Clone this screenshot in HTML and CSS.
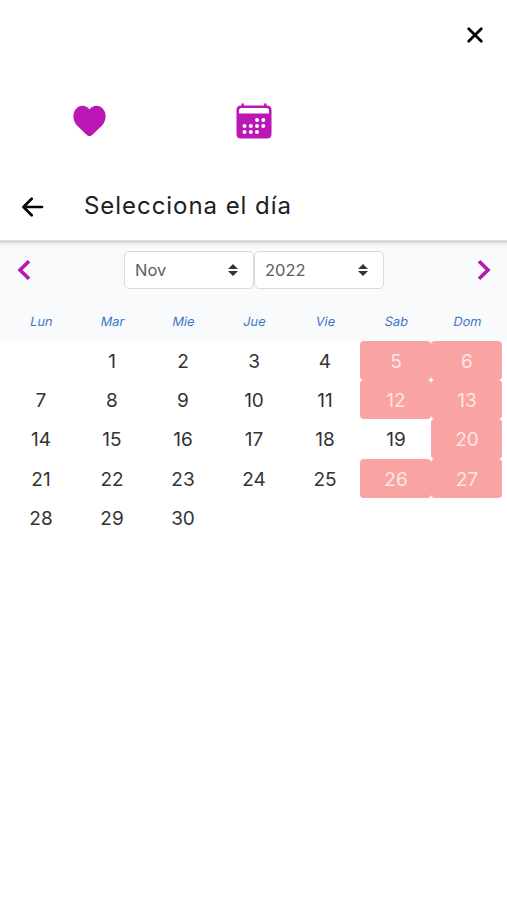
FILE: index.html
```html
<!DOCTYPE html>
<html lang="es">
<head>
<meta charset="utf-8">
<meta name="viewport" content="width=device-width, initial-scale=1">
<title>Selecciona el día</title>
<link rel="stylesheet" href="styles.css">
</head>
<body>
<header class="topbar">
  <button class="icon-button" aria-label="Cerrar"><svg width="18" height="18" viewBox="0 0 18 18"><path class="line" d="M2.700 2.700 15.300 15.300M15.300 2.700 2.700 15.300"/></svg></button>
</header>
<nav class="steps">
  <svg class="heart" width="34" height="32" viewBox="0 0 34 32"><path d="M16.500 31.200c-1.200 0-2-.6-3.500-1.900L4 20.500C-.5 15.500-.8 8 3 4 6.500-.3 13.200-.2 16.500 4.400 19.800-.2 26.500-.3 30 4c3.800 4 3.500 11.500-1 16.500l-9 8.800c-1.500 1.300-2.300 1.900-3.500 1.900z"/></svg>
  <svg class="date" width="36" height="36" viewBox="0 0 36 36">
    <path fill-rule="evenodd" d="M5.500 2.500V1.300q0-1 1.200-1t1.200 1v1.200h20.200V1.300q0-1 1.200-1t1.200 1v1.200H31q4.500 0 4.500 4.500v24q0 4.500-4.500 4.500H5Q.5 35.500.5 31V7Q.5 2.500 5 2.500zM5.500 5Q3 5 3 7.500V10.500h30V7.500Q33 5 30.500 5z"/>
    <g class="dots"><circle cx="21" cy="17" r="2"/><circle cx="27.300" cy="17" r="2"/><circle cx="8.500" cy="23" r="2"/><circle cx="14.800" cy="23" r="2"/><circle cx="21" cy="23" r="2"/><circle cx="27.300" cy="23" r="2"/><circle cx="8.500" cy="29" r="2"/><circle cx="14.800" cy="29" r="2"/><circle cx="21" cy="29" r="2"/></g>
  </svg>
</nav>
<div class="title-row">
  <button class="icon-button" aria-label="Volver"><svg width="22" height="20" viewBox="0 0 22 20"><path class="line back" d="M20 10H2M9.700 1.800 1.500 10l8.200 8.200"/></svg></button>
  <h1>Selecciona el día</h1>
</div>
<main>
  <div class="calendar-head">
    <div class="controls">
      <button class="icon-button" aria-label="Mes anterior"><svg width="14" height="20" viewBox="0 0 14 20"><path class="chevron" d="M12 1.200 3 10l9 8.800"/></svg></button>
      <div class="selects">
        <button class="select">Nov<svg width="10" height="12" viewBox="0 0 10 12"><path d="M0 5 5 0l5 5zM0 7h10l-5 5z"/></svg></button>
        <button class="select">2022<svg width="10" height="12" viewBox="0 0 10 12"><path d="M0 5 5 0l5 5zM0 7h10l-5 5z"/></svg></button>
      </div>
      <button class="icon-button" aria-label="Mes siguiente"><svg width="14" height="20" viewBox="0 0 14 20"><path class="chevron" d="m2 1.200 9 8.800-9 8.800"/></svg></button>
    </div>
    <div class="weekdays"><span>Lun</span><span>Mar</span><span>Mie</span><span>Jue</span><span>Vie</span><span>Sab</span><span>Dom</span></div>
  </div>
  <div class="days">
    <span></span><span>1</span><span>2</span><span>3</span><span>4</span><span class="off">5</span><span class="off">6</span>
    <span>7</span><span>8</span><span>9</span><span>10</span><span>11</span><span class="off">12</span><span class="off">13</span>
    <span>14</span><span>15</span><span>16</span><span>17</span><span>18</span><span>19</span><span class="off">20</span>
    <span>21</span><span>22</span><span>23</span><span>24</span><span>25</span><span class="off">26</span><span class="off">27</span>
    <span>28</span><span>29</span><span>30</span>
  </div>
</main>
</body>
</html>
```
FILE: styles.css
```css
* { box-sizing: border-box; }
body {
  margin: 0;
  min-height: 900px;
  background: #fff;
  color: #333;
  font-family: Inter, "Liberation Sans", sans-serif;
}
svg { display: block; flex: none; }
button { font: inherit; color: inherit; }
.icon-button { padding: 0; border: 0; background: none; }
.line { fill: none; stroke: #050505; stroke-width: 2.8; stroke-linecap: round; }
.line.back { stroke-width: 2.7; stroke-linejoin: round; }
.topbar { display: flex; justify-content: flex-end; height: 70px; padding: 26px 23px 0 0; align-items: flex-start; }
.steps { display: flex; height: 100px; padding: 33px 0 0 73px; gap: 129px; fill: #ba17b4; }
.heart { margin-top: 2px; }
.dots { fill: #fff; }
.title-row { display: flex; align-items: center; height: 70px; padding: 3px 0 0 22px; }
h1 {
  margin: -2px 0 0 40px;
  color: #202020;
  font: 400 24px/32px Inter, "Open Sans", sans-serif;
  letter-spacing: .95px;
  white-space: nowrap;
}
.calendar-head {
  height: 101px;
  padding: 11px 5.5px 0;
  background: linear-gradient(#e4e6e6 0, #cdd0d0 1.500px, #e6e8e8 3px, #f3f5f6 5px, #f8fafc 9px);
}
.controls { display: flex; justify-content: space-between; align-items: center; height: 38px; padding: 0 10.500px 0 11.500px; }
.chevron { fill: none; stroke: #b51bb0; stroke-width: 3.6; }
.selects { display: flex; }
.select {
  display: flex;
  align-items: center;
  justify-content: space-between;
  width: 130px;
  height: 38px;
  padding: 0 15px 0 10px;
  border: 1.500px solid #d7dbdc;
  border-radius: 5px;
  background: #fff;
  color: #5c5e60;
  font-size: 16.500px;
}
.select svg { fill: #343434; }
.weekdays, .days { display: grid; grid-template-columns: repeat(7, 71px); }
.weekdays { margin-top: 24px; color: #3d78c7; font-size: 12.800px; line-height: 18px; text-align: center; }
.weekdays span { transform: skewX(-11deg); }
.days { grid-auto-rows: 39.200px; padding: 0 5px; }
.days span { display: flex; align-items: center; justify-content: center; padding: 2px 0 0 1px; border-radius: 4px; font-size: 19px; }
.days .off { background: #f9a3a3; color: #fde7e2; }
```
